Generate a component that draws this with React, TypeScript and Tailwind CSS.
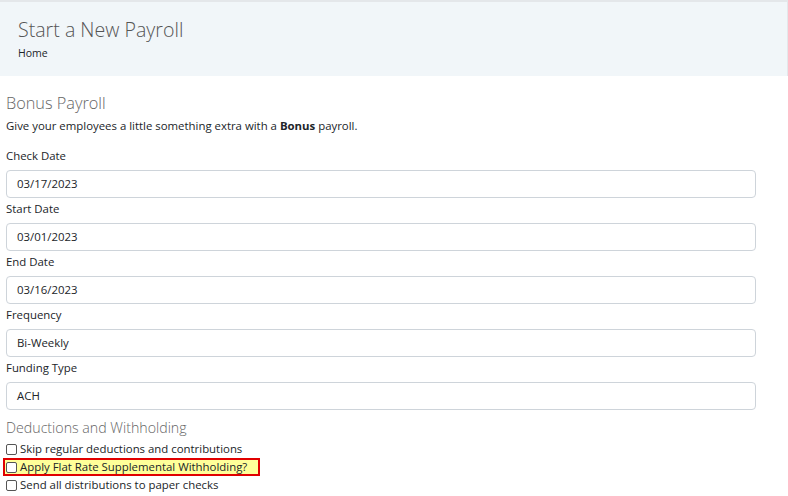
import React from 'react';

const fields = [
  { label: 'Check Date', value: '03/17/2023' },
  { label: 'Start Date', value: '03/01/2023' },
  { label: 'End Date', value: '03/16/2023' },
  { label: 'Frequency', value: 'Bi-Weekly' },
  { label: 'Funding Type', value: 'ACH' },
];

function Checkbox({ label }: { label: string }) {
  return (
    <label className="flex items-center gap-[3px] h-[18px] text-[11.4px] text-[#212529] whitespace-nowrap">
      <span className="w-[11px] h-[11px] border border-[#555] rounded-[2px] bg-white shrink-0" />
      <span>{label}</span>
    </label>
  );
}

export default function App() {
  return (
    <div
      className="w-[788px] h-[496px] overflow-hidden bg-white border-t-2 border-[#e4e7ea]"
      style={{ fontFamily: '"Open Sans", "Noto Sans", sans-serif' }}
    >
      <div className="h-[74px] bg-[#f1f6f9] pl-[18px] pt-[13px] border-r border-[#e4e7ea]">
        <h1 className="text-[19.6px] leading-[30px] font-light text-[#555]">Start a New Payroll</h1>
        <div className="text-[10.5px] leading-[16px] text-[#212529]">Home</div>
      </div>

      <div className="px-[6px] pr-[32px] border-b border-[#ddd] h-[418px]">
        <h2 className="mt-[14px] text-[16.3px] leading-[26px] font-light text-[#666]">Bonus Payroll</h2>
        <p className="mt-[2px] text-[11.4px] leading-[16px] text-[#212529]">
          Give your employees a little something extra with a <b>Bonus</b> payroll.
        </p>
        <div className="mt-[11px]">
          {fields.map((f) => (
            <div key={f.label}>
              <div className="h-[25px] leading-[22px] text-[11.4px] text-[#212529]">{f.label}</div>
              <div className="h-[28px] border border-[#ced4da] rounded-[4px] flex items-center pl-[10px] text-[11.4px] text-[#212529]">
                {f.value}
              </div>
            </div>
          ))}
        </div>
        <h3 className="mt-[8px] mb-[2px] text-[14.2px] leading-[20px] font-light text-[#666]">Deductions and Withholding</h3>
        <Checkbox label="Skip regular deductions and contributions" />
        <div className="-ml-[3px] w-[257px] h-[18px] border-2 border-[#e00000] bg-[#ffff99] pl-[1px] flex items-center">
          <Checkbox label="Apply Flat Rate Supplemental Withholding?" />
        </div>
        <Checkbox label="Send all distributions to paper checks" />
      </div>
    </div>
  );
}
